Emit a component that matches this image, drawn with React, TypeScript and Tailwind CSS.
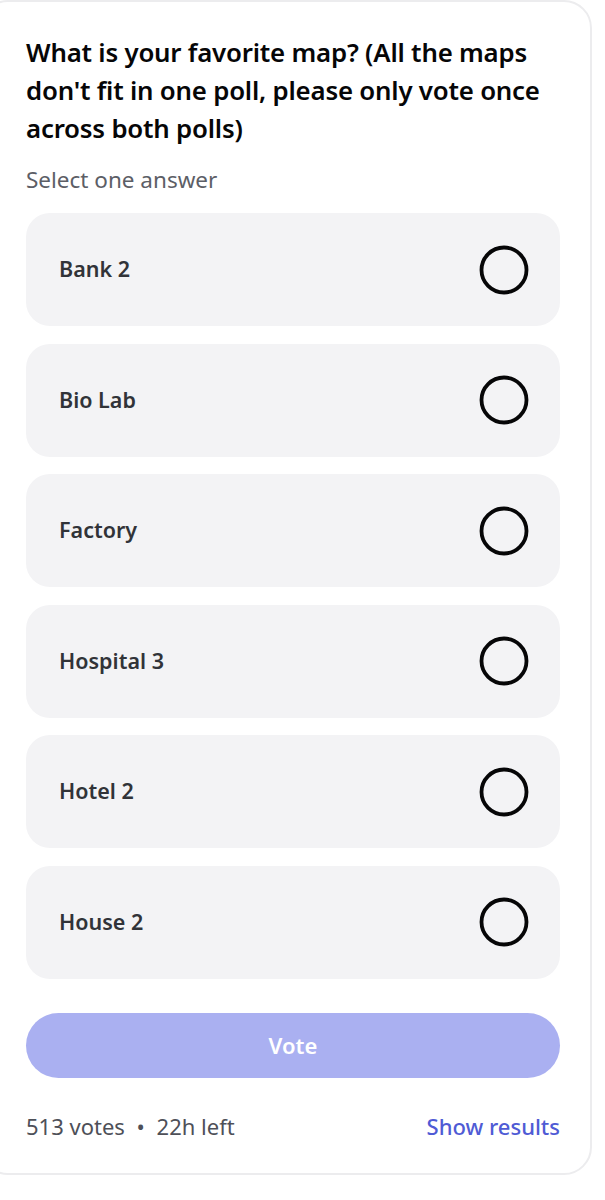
const options = ['Bank 2', 'Bio Lab', 'Factory', 'Hospital 3', 'Hotel 2', 'House 2']

function Radio() {
  return (
    <svg width="50" height="50" viewBox="0 0 50 50" className="shrink-0">
      <circle cx="25" cy="25" r="22.5" fill="none" stroke="#060607" strokeWidth="3.8" />
    </svg>
  )
}

export default function App() {
  return (
    <div
      className="min-h-[1200px] bg-white"
      style={{ fontFamily: '"Noto Sans", "Open Sans", sans-serif' }}
    >
      <div className="ml-[-20px] w-[612px] rounded-[28px] border-2 border-[#ececee] bg-white pb-[33px] pl-[44px] pr-[30px] pt-[31px]">
        <h2 className="text-[25.8px] font-semibold leading-[38px] tracking-[-0.2px] text-[#060607]">
          What is your favorite map? (All the maps don't fit in one poll, please only vote once across both polls)
        </h2>

        <p className="mt-[19px] text-[22.5px] leading-[28px] text-[#5c5e66]">Select one answer</p>

        <div className="mt-[19px] flex flex-col gap-[17.5px]">
          {options.map((name) => (
            <div
              key={name}
              className="flex h-[113px] items-center justify-between rounded-[24px] bg-[#f3f3f5] pl-[33px] pr-[31px]"
            >
              <span className="text-[21.5px] font-semibold text-[#313338]">{name}</span>
              <Radio />
            </div>
          ))}
        </div>

        <button className="mt-[34px] flex h-[65px] w-full items-center justify-center rounded-full bg-[#aab0f1] text-[22px] font-semibold text-white">
          Vote
        </button>

        <div className="mt-[34px] flex items-center justify-between text-[22px] leading-[28px]">
          <span className="text-[#4e5058]">
            513 votes <span className="mx-[6px]">•</span> 22h left
          </span>
          <span className="font-medium text-[#4f5bd5]">Show results</span>
        </div>
      </div>
    </div>
  )
}
